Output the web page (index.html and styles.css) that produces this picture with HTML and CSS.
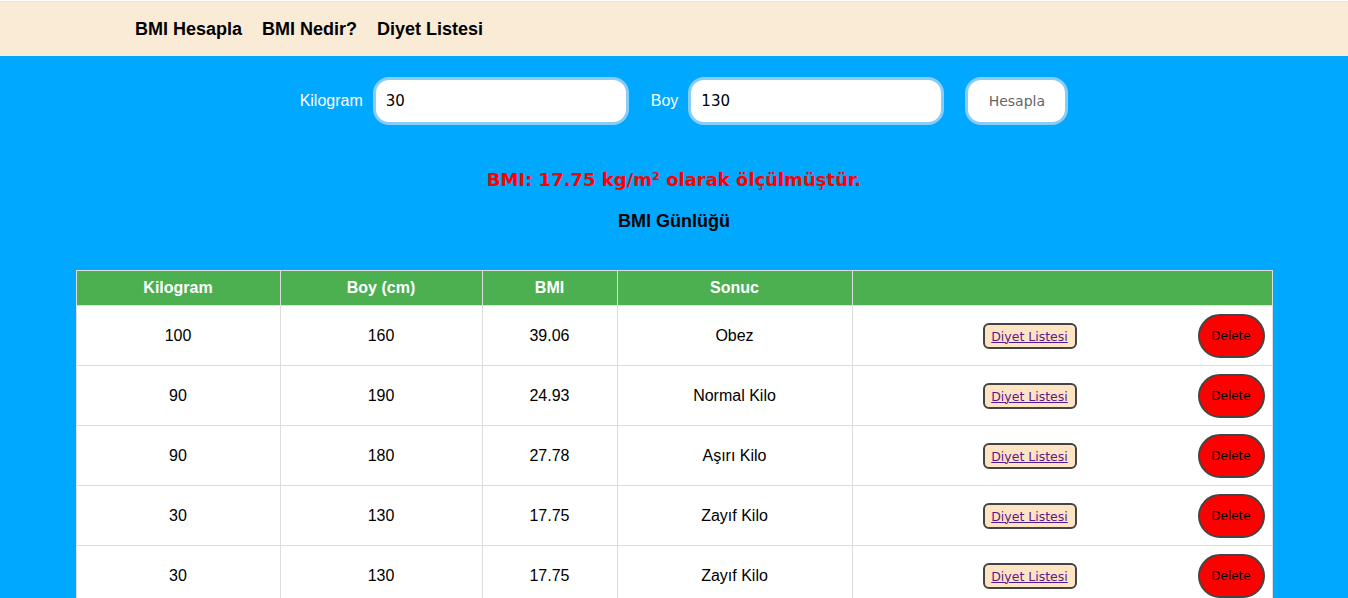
FILE: index.html
```html
<!DOCTYPE html>
<html lang="tr">
<head>
<meta charset="utf-8">
<title>BMI Hesapla</title>
<link rel="stylesheet" href="styles.css">
</head>
<body>
<header class="topbar">
  <nav class="nav">
    <a class="nav-link" href="#">BMI Hesapla</a>
    <a class="nav-link" href="#">BMI Nedir?</a>
    <a class="nav-link" href="#">Diyet Listesi</a>
  </nav>
</header>
<main class="main">
  <form class="calc">
    <label class="calc-label">Kilogram</label>
    <input class="calc-input" type="text" value="30">
    <label class="calc-label calc-label-boy">Boy</label>
    <input class="calc-input" type="text" value="130">
    <button class="calc-btn" type="button">Hesapla</button>
  </form>
  <p class="result">BMI: 17.75 kg/m² olarak ölçülmüştür.</p>
  <h2 class="log-title">BMI Günlüğü</h2>
  <table class="log">
    <thead>
      <tr>
        <th class="c1">Kilogram</th>
        <th class="c2">Boy (cm)</th>
        <th class="c3">BMI</th>
        <th class="c4">Sonuc</th>
        <th class="c5"></th>
      </tr>
    </thead>
    <tbody>
      <tr>
        <td>100</td><td>160</td><td>39.06</td><td>Obez</td>
        <td class="actions"><span class="diet"><a href="#">Diyet Listesi</a></span><button class="del" type="button">Delete</button></td>
      </tr>
      <tr>
        <td>90</td><td>190</td><td>24.93</td><td>Normal Kilo</td>
        <td class="actions"><span class="diet"><a href="#">Diyet Listesi</a></span><button class="del" type="button">Delete</button></td>
      </tr>
      <tr>
        <td>90</td><td>180</td><td>27.78</td><td>Aşırı Kilo</td>
        <td class="actions"><span class="diet"><a href="#">Diyet Listesi</a></span><button class="del" type="button">Delete</button></td>
      </tr>
      <tr>
        <td>30</td><td>130</td><td>17.75</td><td>Zayıf Kilo</td>
        <td class="actions"><span class="diet"><a href="#">Diyet Listesi</a></span><button class="del" type="button">Delete</button></td>
      </tr>
      <tr>
        <td>30</td><td>130</td><td>17.75</td><td>Zayıf Kilo</td>
        <td class="actions"><span class="diet"><a href="#">Diyet Listesi</a></span><button class="del" type="button">Delete</button></td>
      </tr>
    </tbody>
  </table>
</main>
</body>
</html>
```
FILE: styles.css
```css
html {
  background: #ffffff;
}
body {
  margin: 0;
  padding-top: 1px;
  background: #ffffff;
  font-family: "Liberation Sans", Arial, sans-serif;
  color: #000;
}
.topbar {
  border-top: 1px solid #e2e2e2;
  background: #faebd7;
  height: 54px;
}
.nav {
  display: flex;
  align-items: center;
  height: 54px;
  padding-left: 135px;
  gap: 20px;
}
.nav-link {
  font-size: 18px;
  font-weight: bold;
  color: #000;
  text-decoration: none;
}
.main {
  background: #00a8ff;
  padding-top: 21px;
  min-height: 600px;
}
.calc {
  display: flex;
  align-items: center;
  justify-content: center;
  padding-left: 20px;
  margin: 0;
}
.calc-label {
  color: #fff;
  font-size: 16px;
  margin-right: 10px;
}
.calc-label-boy {
  margin-left: 22px;
  margin-right: 10px;
}
.calc-input {
  box-sizing: border-box;
  width: 256px;
  height: 48px;
  border: 3px solid #87cdf7;
  border-radius: 16px;
  padding: 0 10px;
  font-family: "Comic Sans MS", "DejaVu Sans", sans-serif;
  font-size: 15px;
  color: #000;
  background: #fff;
  outline: none;
}
.calc-btn {
  box-sizing: border-box;
  margin-left: 21px;
  width: 103px;
  height: 48px;
  border: 3px solid #87cdf7;
  border-radius: 16px;
  background: #fff;
  color: #666;
  font-family: "Comic Sans MS", "DejaVu Sans", sans-serif;
  font-size: 14px;
}
.result {
  margin: 43px 0 0;
  text-align: center;
  color: #ff0000;
  font-family: "Comic Sans MS", "DejaVu Sans", sans-serif;
  font-weight: bold;
  font-size: 18px;
  line-height: 24px;
}
.log-title {
  margin: 17px 0 0;
  text-align: center;
  font-size: 18px;
  line-height: 24px;
  font-weight: bold;
}
.log {
  margin: 37px auto 0;
  width: 1197px;
  border-collapse: collapse;
  background: #fff;
  table-layout: fixed;
}
.log th,
.log td {
  border: 1px solid #dddddd;
  text-align: center;
  font-size: 16px;
  padding: 0;
}
.log th {
  background: #4caf50;
  color: #fff;
  font-weight: bold;
  height: 34px;
}
.log td {
  height: 59px;
}
.c1 { width: 203px; }
.c2 { width: 201px; }
.c3 { width: 134px; }
.c4 { width: 234px; }
.log td.actions {
  text-align: right;
  padding-right: 7px;
}
.diet {
  display: inline-block;
  vertical-align: middle;
  box-sizing: border-box;
  width: 94px;
  height: 26px;
  line-height: 21px;
  border: 2px solid #444;
  border-radius: 6px;
  background: #ffe4c4;
  text-align: center;
  margin-right: 121px;
}
.diet a {
  color: #551a8b;
  font-family: "Comic Sans MS", "DejaVu Sans", sans-serif;
  font-size: 12.5px;
  text-decoration: underline;
}
.del {
  display: inline-block;
  vertical-align: middle;
  box-sizing: border-box;
  width: 67px;
  height: 44px;
  border: 2px solid #444;
  border-radius: 22px;
  background: #ff0000;
  color: #000;
  font-family: "Comic Sans MS", "DejaVu Sans", sans-serif;
  font-size: 12px;
  padding: 0;
}
```
